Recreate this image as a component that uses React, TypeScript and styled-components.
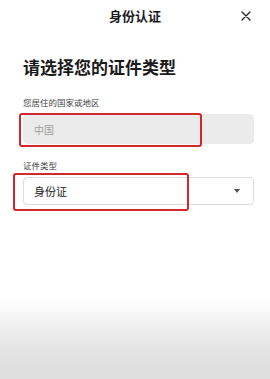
import React from 'react';
import styled, { createGlobalStyle } from 'styled-components';

const GlobalStyle = createGlobalStyle`
  html, body {
    margin: 0;
    padding: 0;
    background: #fff;
  }
  body {
    font-family: "Noto Sans CJK SC", "Noto Sans", sans-serif;
  }
`;

const Page = styled.div`
  display: flex;
  flex-direction: column;
  height: 379px;
  background: linear-gradient(
    to bottom,
    #ffffff 0,
    #ffffff 300px,
    #f0f0f0 325px,
    #e4e4e4 350px,
    #dddddd 379px
  );
`;

const Header = styled.header`
  display: grid;
  grid-template-columns: 1fr auto 1fr;
  align-items: center;
  height: 31px;
`;

const HeaderTitle = styled.div`
  grid-column: 2;
  font-size: 13px;
  font-weight: 700;
  color: #1a1a1a;
`;

const CloseButton = styled.button`
  justify-self: end;
  margin-right: 18px;
  width: 12px;
  height: 14px;
  padding: 0;
  border: none;
  background: none;
  display: flex;
  align-items: center;
  justify-content: center;
  color: #222;
`;

const Content = styled.main`
  display: flex;
  flex-direction: column;
  padding: 0 16px 0 23px;
`;

const Heading = styled.h1`
  margin: 24px 0 0;
  font-size: 17px;
  line-height: 24px;
  font-weight: 700;
  color: #1a1a1a;
`;

const Label = styled.div<{ $top: number }>`
  margin-top: ${(p) => p.$top}px;
  font-size: 8.5px;
  line-height: 12px;
  color: #444;
`;

const Field = styled.div<{ $disabled?: boolean; $height: number }>`
  position: relative;
  margin-top: 6px;
  height: ${(p) => p.$height}px;
  box-sizing: border-box;
  display: flex;
  align-items: center;
  padding: 0 10px;
  border-radius: 4px;
  background: ${(p) => (p.$disabled ? '#ebebeb' : '#fff')};
  border: 1px solid ${(p) => (p.$disabled ? '#ebebeb' : '#dcdcdc')};
`;

const FieldText = styled.span<{ $muted?: boolean }>`
  flex: 1;
  font-size: ${(p) => (p.$muted ? 10 : 11)}px;
  color: ${(p) => (p.$muted ? '#a0a0a0' : '#222')};
`;

const Caret = styled.span`
  width: 0;
  height: 0;
  margin-right: 3px;
  border-left: 3.5px solid transparent;
  border-right: 3.5px solid transparent;
  border-top: 4px solid #555;
`;

const Highlight = styled.div<{ $left: number; $top: number; $width: number; $height: number }>`
  position: absolute;
  left: ${(p) => p.$left}px;
  top: ${(p) => p.$top}px;
  width: ${(p) => p.$width}px;
  height: ${(p) => p.$height}px;
  box-sizing: border-box;
  border: 2px solid #d0282d;
  border-radius: 3px;
  pointer-events: none;
`;

export default function App() {
  return (
    <>
      <GlobalStyle />
      <Page>
        <Header>
          <HeaderTitle>身份认证</HeaderTitle>
          <CloseButton aria-label="关闭">
            <svg width="10" height="10" viewBox="0 0 10 10">
              <path d="M1 1L9 9M9 1L1 9" stroke="#222" strokeWidth="1.3" strokeLinecap="round" />
            </svg>
          </CloseButton>
        </Header>
        <Content>
          <Heading>请选择您的证件类型</Heading>

          <Label $top={17}>您居住的国家或地区</Label>
          <Field $disabled $height={30}>
            <FieldText $muted>中国</FieldText>
            <Highlight $left={-5} $top={-2} $width={183} $height={34} />
          </Field>

          <Label $top={15}>证件类型</Label>
          <Field $height={28}>
            <FieldText>身份证</FieldText>
            <Caret />
            <Highlight $left={-11} $top={-5} $width={176} $height={38} />
          </Field>
        </Content>
      </Page>
    </>
  );
}
